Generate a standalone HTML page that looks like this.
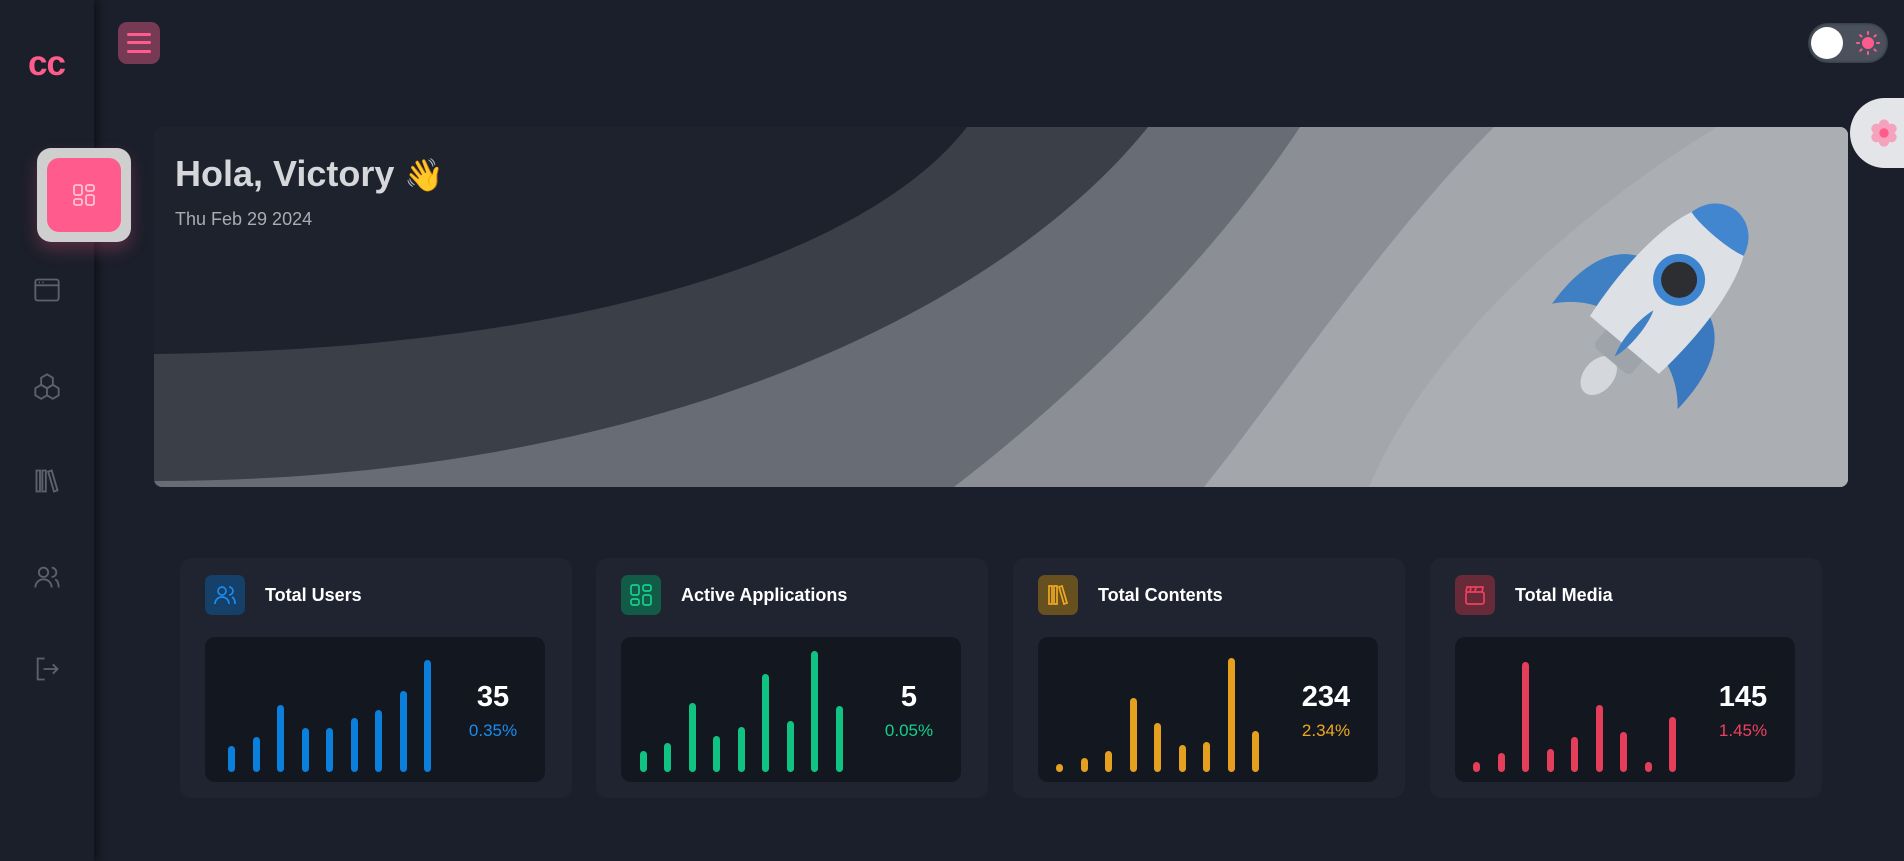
<!DOCTYPE html>
<html><head><meta charset="utf-8"><style>
*{margin:0;padding:0;box-sizing:border-box}
body{width:1904px;height:861px;background:#1b1f2b;font-family:"Liberation Sans",sans-serif;position:relative;overflow:hidden}
.side{position:absolute;left:0;top:0;width:94px;height:861px;background:#1b1f2a;box-shadow:4px 0 8px rgba(0,0,0,.45)}
.logo{position:absolute;left:28px;top:44px;color:#ff5c8d;font-weight:bold;font-size:35px;letter-spacing:-1px}
.act{position:absolute;left:37px;top:148px;width:94px;height:94px;background:#cfcfcf;border-radius:14px;box-shadow:0 8px 16px rgba(255,92,141,.25)}
.act .in{position:absolute;left:10px;top:10px;width:74px;height:74px;background:#ff5c8d;border-radius:12px}
.nav{position:absolute;left:33px}
.ham{position:absolute;left:118px;top:22px;width:42px;height:42px;background:#773a55;border-radius:9px}
.ham i{position:absolute;left:9px;width:24px;height:3px;border-radius:2px;background:#ff5c8d}
.toggle{position:absolute;left:1808px;top:23px;width:80px;height:40px;border-radius:20px;background:#4a515d;box-shadow:inset 0 0 3px rgba(0,0,0,.5)}
.toggle .k{position:absolute;left:3px;top:4px;width:32px;height:32px;border-radius:50%;background:#fff}
.gear{position:absolute;left:1850px;top:98px;width:70px;height:70px;border-radius:35px 0 0 35px;background:#e4e5e8}
.banner{position:absolute;left:154px;top:127px;width:1694px;height:360px;border-radius:8px;overflow:hidden;background:#1e222d}
.h1{position:absolute;left:21px;top:26px;color:#d6d7da;font-size:36px;font-weight:bold}
.date{position:absolute;left:21px;top:82px;color:#a9acb2;font-size:18px}
.card{position:absolute;top:558px;width:392px;height:240px;background:#1f2430;border-radius:12px}
.ic{position:absolute;left:25px;top:17px;width:40px;height:40px;border-radius:7px}
.ttl{position:absolute;left:85px;top:27px;color:#fff;font-weight:bold;font-size:18px}
.chart{position:absolute;left:25px;top:79px;width:340px;height:145px;background:#131820;border-radius:10px}
.bar{position:absolute;bottom:10px;width:7px;border-radius:4px}
.num{position:absolute;left:228px;width:120px;text-align:center;top:44px;color:#fff;font-weight:bold;font-size:29px}
.pct{position:absolute;left:228px;width:120px;text-align:center;top:84px;font-size:17px}
</style></head><body>
<div class="side">
<div class="logo">cc</div>
<div class="act"><div class="in"><svg style="position:absolute;left:25px;top:25px" width="24" height="24" viewBox="0 0 24 24" fill="none" stroke="#ffc3d5" stroke-width="1.8"><rect x="2" y="2" width="8" height="10" rx="2"/><rect x="14" y="2" width="8" height="6" rx="2"/><rect x="2" y="16" width="8" height="6" rx="2"/><rect x="14" y="12" width="8" height="10" rx="2"/></svg></div></div>
<svg class="nav" style="top:276px" width="28" height="28" viewBox="0 0 24 24" fill="none" stroke="#5c616c" stroke-width="1.6"><rect x="2" y="3" width="20" height="18" rx="2"/><path d="M2 8h20M5 5.5h1M8 5.5h1"/></svg>
<svg class="nav" style="top:372px" width="28" height="28" viewBox="0 0 24 24" fill="none" stroke="#5c616c" stroke-width="1.6"><path d="M12 2l5 3v6l-5 3-5-3V5z"/><path d="M7 11l5 3v6l-5 3-5-3v-6zM17 11l5 3v6l-5 3-5-3v-6z"/></svg>
<svg class="nav" style="top:467px" width="28" height="28" viewBox="0 0 24 24" fill="none" stroke="#5c616c" stroke-width="1.6"><path d="M3 3h3v18H3zM8 3h3v18H8zM13 4l3-1 5 17-3 1z"/></svg>
<svg class="nav" style="top:563px" width="28" height="28" viewBox="0 0 24 24" fill="none" stroke="#5c616c" stroke-width="1.6"><circle cx="9" cy="8" r="4"/><path d="M2 21c0-4 3-7 7-7s7 3 7 7M16 4a4 4 0 010 8M19 14c2 1 3 4 3 7"/></svg>
<svg class="nav" style="top:655px" width="28" height="28" viewBox="0 0 24 24" fill="none" stroke="#5c616c" stroke-width="1.6"><path d="M10 3H4v18h6M9 12h12M17 8l4 4-4 4"/></svg>
</div>
<div class="ham"><i style="top:11px"></i><i style="top:19px"></i><i style="top:28px"></i></div>
<div class="toggle"><div class="k"></div><svg style="position:absolute;left:48px;top:8px" width="24" height="24" viewBox="0 0 24 24" stroke="#ff5c8d" stroke-width="2" stroke-linecap="round"><circle cx="12" cy="12" r="5" fill="#ff5c8d"/><path d="M12 1v2M12 21v2M1 12h2M21 12h2M4.2 4.2l1.4 1.4M18.4 18.4l1.4 1.4M4.2 19.8l1.4-1.4M18.4 5.6l1.4-1.4"/></svg></div>
<div class="gear"><svg style="position:absolute;left:18px;top:19px" width="32" height="32" viewBox="0 0 34 34"><g fill="#f5a3bd"><circle cx="17" cy="8" r="5.5"/><circle cx="17" cy="26" r="5.5"/><circle cx="9" cy="12.5" r="5.5"/><circle cx="25" cy="12.5" r="5.5"/><circle cx="9" cy="21.5" r="5.5"/><circle cx="25" cy="21.5" r="5.5"/><circle cx="17" cy="17" r="9"/></g><circle cx="17" cy="17" r="5" fill="#ff5c8d"/></svg></div>
<div class="banner">
<svg width="1694" height="360" style="position:absolute;left:0;top:0">
<path d="M0,227 C450,222 720,120 813,0 L1694,0 L1694,360 L0,360Z" fill="#3a3f48"/>
<path d="M0,354 C500,354 850,180 994,0 L1694,0 L1694,360 L0,360Z" fill="#686c74"/>
<path d="M800,360 C930,260 1060,130 1146,0 L1694,0 L1694,360Z" fill="#8b8e95"/>
<path d="M1050,360 C1130,260 1230,110 1340,0 L1694,0 L1694,360Z" fill="#a3a6aa"/>
<path d="M1215,360 C1270,230 1400,100 1563,0 L1694,0 L1694,360Z" fill="#abaeb2"/>
<g transform="translate(1509,172) rotate(40)">
<ellipse cx="0" cy="100" rx="15" ry="22" fill="#d4d8dc"/>
<rect x="-24" y="55" width="48" height="26" rx="6" fill="#9ea4aa"/>
<path d="M-38,-20 C-75,-10 -85,30 -82,75 C-70,60 -55,50 -38,45Z" fill="#3f7fc4"/>
<path d="M38,-20 C75,-10 85,30 82,75 C70,60 55,50 38,45Z" fill="#3a78bf"/>
<path d="M0,-115 C45,-110 55,-20 45,60 L-45,60 C-55,-20 -45,-110 0,-115Z" fill="#dde0e4"/>
<path d="M0,-115 C18,-114 30,-102 34,-85 C20,-80 -20,-80 -34,-85 C-30,-102 -18,-114 0,-115Z" fill="#4286cf"/>
<circle cx="0" cy="-25" r="26" fill="#3f84cf"/><circle cx="0" cy="-25" r="18" fill="#2c2e31"/>
<path d="M0,15 C6,30 6,60 0,75 C-6,60 -6,30 0,15Z" fill="#3f7fc4"/>
</g></svg>
<div class="h1">Hola, Victory <span style="font-size:32px">👋</span></div>
<div class="date">Thu Feb 29 2024</div>
</div>

<div class="card" style="left:180px"><div class="ic" style="background:#14406a"><svg style="position:absolute;left:8px;top:8px" width="24" height="24" viewBox="0 0 24 24" fill="none" stroke="#1a8cf0" stroke-width="1.7"><circle cx="9" cy="8" r="4"/><path d="M2 21c0-4 3-7 7-7s7 3 7 7M16 4a4 4 0 010 8M19 14c2 1 3 4 3 7"/></svg></div><div class="ttl">Total Users</div>
<div class="chart">
<div class="bar" style="left:23px;height:26px;background:#0a7fdc"></div><div class="bar" style="left:48px;height:35px;background:#0a7fdc"></div><div class="bar" style="left:72px;height:67px;background:#0a7fdc"></div><div class="bar" style="left:97px;height:44px;background:#0a7fdc"></div><div class="bar" style="left:121px;height:44px;background:#0a7fdc"></div><div class="bar" style="left:146px;height:54px;background:#0a7fdc"></div><div class="bar" style="left:170px;height:62px;background:#0a7fdc"></div><div class="bar" style="left:195px;height:81px;background:#0a7fdc"></div><div class="bar" style="left:219px;height:112px;background:#0a7fdc"></div>
<div class="num">35</div><div class="pct" style="color:#1a8cf0">0.35%</div></div></div>

<div class="card" style="left:596px"><div class="ic" style="background:#125c47"><svg style="position:absolute;left:8px;top:8px" width="24" height="24" viewBox="0 0 24 24" fill="none" stroke="#14d08c" stroke-width="1.7"><rect x="2" y="2" width="8" height="10" rx="2"/><rect x="14" y="2" width="8" height="6" rx="2"/><rect x="2" y="16" width="8" height="6" rx="2"/><rect x="14" y="12" width="8" height="10" rx="2"/></svg></div><div class="ttl">Active Applications</div>
<div class="chart">
<div class="bar" style="left:19px;height:21px;background:#10c383"></div><div class="bar" style="left:43px;height:29px;background:#10c383"></div><div class="bar" style="left:68px;height:69px;background:#10c383"></div><div class="bar" style="left:92px;height:36px;background:#10c383"></div><div class="bar" style="left:117px;height:45px;background:#10c383"></div><div class="bar" style="left:141px;height:98px;background:#10c383"></div><div class="bar" style="left:166px;height:51px;background:#10c383"></div><div class="bar" style="left:190px;height:121px;background:#10c383"></div><div class="bar" style="left:215px;height:66px;background:#10c383"></div>
<div class="num">5</div><div class="pct" style="color:#14d08c">0.05%</div></div></div>

<div class="card" style="left:1013px"><div class="ic" style="background:#66501f"><svg style="position:absolute;left:8px;top:8px" width="24" height="24" viewBox="0 0 24 24" fill="none" stroke="#f0a820" stroke-width="1.7"><path d="M3 3h3v18H3zM8 3h3v18H8zM13 4l3-1 5 17-3 1z"/></svg></div><div class="ttl">Total Contents</div>
<div class="chart">
<div class="bar" style="left:18px;height:8px;background:#e5a020"></div><div class="bar" style="left:43px;height:14px;background:#e5a020"></div><div class="bar" style="left:67px;height:21px;background:#e5a020"></div><div class="bar" style="left:92px;height:74px;background:#e5a020"></div><div class="bar" style="left:116px;height:49px;background:#e5a020"></div><div class="bar" style="left:141px;height:27px;background:#e5a020"></div><div class="bar" style="left:165px;height:30px;background:#e5a020"></div><div class="bar" style="left:190px;height:114px;background:#e5a020"></div><div class="bar" style="left:214px;height:41px;background:#e5a020"></div>
<div class="num">234</div><div class="pct" style="color:#f0a820">2.34%</div></div></div>

<div class="card" style="left:1430px"><div class="ic" style="background:#672a38"><svg style="position:absolute;left:8px;top:8px" width="24" height="24" viewBox="0 0 24 24" fill="none" stroke="#f0405e" stroke-width="1.7"><rect x="3" y="9" width="18" height="12" rx="2"/><path d="M3 9l1-5 16 0-1 5M8 4l-1 5M13 4l-1 5"/></svg></div><div class="ttl">Total Media</div>
<div class="chart">
<div class="bar" style="left:18px;height:10px;background:#e53e5a"></div><div class="bar" style="left:43px;height:19px;background:#e53e5a"></div><div class="bar" style="left:67px;height:110px;background:#e53e5a"></div><div class="bar" style="left:92px;height:23px;background:#e53e5a"></div><div class="bar" style="left:116px;height:35px;background:#e53e5a"></div><div class="bar" style="left:141px;height:67px;background:#e53e5a"></div><div class="bar" style="left:165px;height:40px;background:#e53e5a"></div><div class="bar" style="left:190px;height:10px;background:#e53e5a"></div><div class="bar" style="left:214px;height:55px;background:#e53e5a"></div>
<div class="num">145</div><div class="pct" style="color:#f0405e">1.45%</div></div></div>
</body></html>
